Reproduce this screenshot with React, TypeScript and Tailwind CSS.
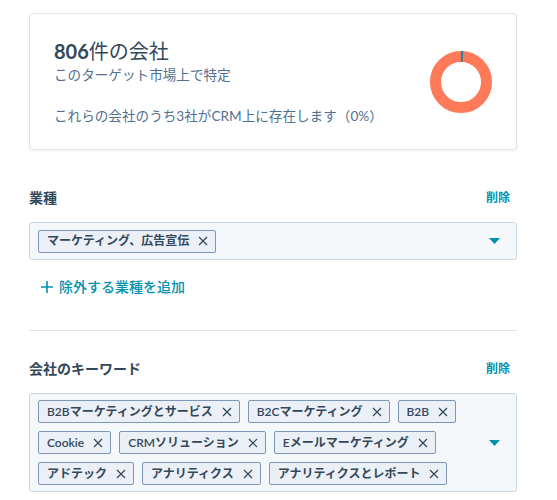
import { useState } from "react";

const font = { fontFamily: '"Lato", "Noto Sans CJK JP", sans-serif' };

const industries = ["マーケティング、広告宣伝"];
const keywords = [
  "B2Bマーケティングとサービス",
  "B2Cマーケティング",
  "B2B",
  "Cookie",
  "CRMソリューション",
  "Eメールマーケティング",
  "アドテック",
  "アナリティクス",
  "アナリティクスとレポート",
];

function Donut() {
  // 3 / 806 in CRM, the rest outside
  const r = 25.5;
  const c = 2 * Math.PI * r;
  const part = Math.max((3 / 806) * c, 2);
  return (
    <svg width="62" height="62" viewBox="0 0 62 62">
      <g transform="rotate(-90 31 31)">
        <circle cx="31" cy="31" r={r} fill="none" stroke="#ff7a59" strokeWidth="11" />
        <circle
          cx="31"
          cy="31"
          r={r}
          fill="none"
          stroke="#0091ae"
          strokeWidth="11"
          strokeDasharray={`${part} ${c}`}
        />
      </g>
    </svg>
  );
}

function Caret() {
  return (
    <svg width="11" height="6" viewBox="0 0 11 6" className="shrink-0">
      <path d="M0 0h11L5.5 6z" fill="#0091ae" />
    </svg>
  );
}

function Tag({ text, onRemove }: { text: string; onRemove: () => void }) {
  return (
    <span className="flex h-[23px] items-center gap-[9px] rounded-[2px] border border-[#7c98b6] bg-[#eaf0f6] pl-2 pr-[7px] text-[12px] font-semibold leading-none text-[#33475b]">
      {text}
      <button onClick={onRemove} className="flex items-center">
        <svg width="10" height="10" viewBox="0 0 10 10">
          <path d="M1 1l8 8M9 1L1 9" stroke="#33475b" strokeWidth="1.2" />
        </svg>
      </button>
    </span>
  );
}

function Section({
  label,
  items,
  setItems,
}: {
  label: string;
  items: string[];
  setItems: (v: string[]) => void;
}) {
  return (
    <div className="flex flex-col">
      <div className="flex items-center justify-between pr-[7px]">
        <h2 className="text-[14px] font-semibold leading-5 text-[#33475b]">{label}</h2>
        <button className="text-[12px] font-semibold text-[#0091ae]">削除</button>
      </div>
      <div className="mt-[14px] flex min-h-[38px] items-center rounded-[3px] border border-[#cbd6e2] bg-[#f5f8fa] py-[6px] pl-2 pr-4">
        <div className="flex flex-1 flex-wrap gap-x-2 gap-y-2">
          {items.map((t) => (
            <Tag key={t} text={t} onRemove={() => setItems(items.filter((x) => x !== t))} />
          ))}
        </div>
        <Caret />
      </div>
    </div>
  );
}

export default function App() {
  const [ind, setInd] = useState(industries);
  const [kw, setKw] = useState(keywords);

  return (
    <div className="min-h-[500px] w-[557px] bg-white pl-[29px] pr-[40px] pt-[13px]" style={font}>
      {/* summary card */}
      <div className="flex h-[137px] items-center justify-between rounded-[4px] border border-[#dfe3eb] bg-white pl-6 pr-6 shadow-[0_1px_3px_rgba(45,62,80,0.08)]">
        <div className="flex flex-col">
          <p className="text-[20px] leading-7 text-[#33475b]">
            <span className="font-bold">806</span>件の会社
          </p>
          <p className="text-[13.6px] leading-5 text-[#516f90]">このターゲット市場上で特定</p>
          <p className="mt-[21px] text-[13.6px] leading-5 text-[#516f90]">
            これらの会社のうち3社がCRM上に存在します（0%）
          </p>
        </div>
        <Donut />
      </div>

      <div className="mt-[38px]">
        <Section label="業種" items={ind} setItems={setInd} />
      </div>
      <button className="ml-[12px] mt-[16px] flex items-center gap-[6px] text-[14px] font-medium text-[#0091ae]">
        <svg width="12" height="12" viewBox="0 0 12 12">
          <path d="M6 0v12M0 6h12" stroke="#0091ae" strokeWidth="1.6" />
        </svg>
        除外する業種を追加
      </button>

      <div className="mt-[33px] h-px bg-[#dfe3eb]" />

      <div className="mt-[28px]">
        <Section label="会社のキーワード" items={kw} setItems={setKw} />
      </div>
    </div>
  );
}
